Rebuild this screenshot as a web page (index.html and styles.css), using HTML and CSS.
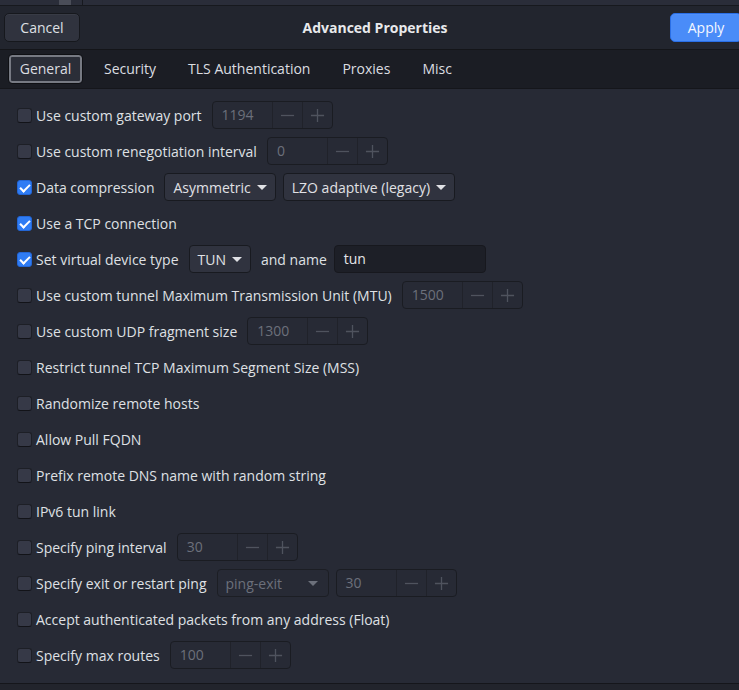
FILE: index.html
```html
<!DOCTYPE html>
<html lang="en">
<head>
    <meta charset="UTF-8">
    <meta name="viewport" content="width=device-width, initial-scale=1.0">
    <title>Advanced Properties</title>
    <link rel="stylesheet" href="styles.css">
</head>
<body>

    <div class="strip">
        <span class="strip-block"></span>
        <span class="strip-line"></span>
    </div>

    <div class="header">
        <button class="btn">Cancel</button>
        <div class="title">Advanced Properties</div>
        <button class="btn apply">Apply</button>
    </div>

    <div class="tabs">
        <span class="tab active">General</span>
        <span class="tab">Security</span>
        <span class="tab">TLS Authentication</span>
        <span class="tab">Proxies</span>
        <span class="tab">Misc</span>
    </div>

    <div class="content">
        <div class="row">
            <span class="check"></span><span class="label">Use custom gateway port</span>
            <div class="spin"><span class="spin-value">1194</span><span class="spin-btn"><svg viewBox="0 0 16 16"><path d="M1 8h14"/></svg></span><span class="spin-btn"><svg viewBox="0 0 16 16"><path d="M1 8h14M8 1v14"/></svg></span></div>
        </div>
        <div class="row">
            <span class="check"></span><span class="label">Use custom renegotiation interval</span>
            <div class="spin"><span class="spin-value">0</span><span class="spin-btn"><svg viewBox="0 0 16 16"><path d="M1 8h14"/></svg></span><span class="spin-btn"><svg viewBox="0 0 16 16"><path d="M1 8h14M8 1v14"/></svg></span></div>
        </div>
        <div class="row">
            <span class="check on"></span><span class="label">Data compression</span>
            <div class="combo">Asymmetric <span class="arrow"></span></div>
            <div class="combo tight">LZO adaptive (legacy) <span class="arrow"></span></div>
        </div>
        <div class="row">
            <span class="check on"></span><span class="label">Use a TCP connection</span>
        </div>
        <div class="row">
            <span class="check on"></span><span class="label">Set virtual device type</span>
            <div class="combo">TUN <span class="arrow"></span></div>
            <span class="text">and name</span>
            <div class="entry">tun</div>
        </div>
        <div class="row">
            <span class="check"></span><span class="label">Use custom tunnel Maximum Transmission Unit (MTU)</span>
            <div class="spin"><span class="spin-value">1500</span><span class="spin-btn"><svg viewBox="0 0 16 16"><path d="M1 8h14"/></svg></span><span class="spin-btn"><svg viewBox="0 0 16 16"><path d="M1 8h14M8 1v14"/></svg></span></div>
        </div>
        <div class="row">
            <span class="check"></span><span class="label">Use custom UDP fragment size</span>
            <div class="spin"><span class="spin-value">1300</span><span class="spin-btn"><svg viewBox="0 0 16 16"><path d="M1 8h14"/></svg></span><span class="spin-btn"><svg viewBox="0 0 16 16"><path d="M1 8h14M8 1v14"/></svg></span></div>
        </div>
        <div class="row">
            <span class="check"></span><span class="label">Restrict tunnel TCP Maximum Segment Size (MSS)</span>
        </div>
        <div class="row">
            <span class="check"></span><span class="label">Randomize remote hosts</span>
        </div>
        <div class="row">
            <span class="check"></span><span class="label">Allow Pull FQDN</span>
        </div>
        <div class="row">
            <span class="check"></span><span class="label">Prefix remote DNS name with random string</span>
        </div>
        <div class="row">
            <span class="check"></span><span class="label">IPv6 tun link</span>
        </div>
        <div class="row">
            <span class="check"></span><span class="label">Specify ping interval</span>
            <div class="spin"><span class="spin-value">30</span><span class="spin-btn"><svg viewBox="0 0 16 16"><path d="M1 8h14"/></svg></span><span class="spin-btn"><svg viewBox="0 0 16 16"><path d="M1 8h14M8 1v14"/></svg></span></div>
        </div>
        <div class="row">
            <span class="check"></span><span class="label">Specify exit or restart ping</span>
            <div class="combo disabled">ping-exit <span class="arrow"></span></div>
            <div class="spin tight"><span class="spin-value">30</span><span class="spin-btn"><svg viewBox="0 0 16 16"><path d="M1 8h14"/></svg></span><span class="spin-btn"><svg viewBox="0 0 16 16"><path d="M1 8h14M8 1v14"/></svg></span></div>
        </div>
        <div class="row">
            <span class="check"></span><span class="label">Accept authenticated packets from any address (Float)</span>
        </div>
        <div class="row">
            <span class="check"></span><span class="label">Specify max routes</span>
            <div class="spin"><span class="spin-value">100</span><span class="spin-btn"><svg viewBox="0 0 16 16"><path d="M1 8h14"/></svg></span><span class="spin-btn"><svg viewBox="0 0 16 16"><path d="M1 8h14M8 1v14"/></svg></span></div>
        </div>
    </div>

    <div class="footer"></div>

</body>
</html>
```

FILE: styles.css
```css
body {
    margin: 0;
    padding: 0;
    font-family: "Open Sans", "Noto Sans", sans-serif;
    font-size: 14px;
    color: #dfe0e4;
    background-color: #22242c;
    height: 690px;
    overflow: hidden;
}

.strip {
    height: 5px;
    background-color: #2a2d39;
    position: relative;
}

.strip-block {
    position: absolute;
    left: 59px;
    top: 0;
    width: 12px;
    height: 5px;
    background-color: #4a4d58;
}

.strip-line {
    position: absolute;
    left: 82px;
    top: 0;
    width: 1px;
    height: 5px;
    background-color: #17191f;
}

.header {
    background-color: #22252e;
    border-top: 1px solid #17191e;
    border-bottom: 1px solid #141519;
    display: flex;
    align-items: center;
    padding: 0 0 0 4px;
    box-sizing: border-box;
    height: 45px;
}

.title {
    flex: 1;
    text-align: center;
    font-weight: bold;
    font-size: 14px;
    color: #e8e9ec;
}

.btn {
    font-family: inherit;
    font-size: 14px;
    color: #dfe0e4;
    background-color: #30333e;
    border: 1px solid #16181d;
    border-radius: 5px;
    height: 29px;
    width: 76px;
    padding: 0;
    box-shadow: inset 0 1px 0 rgba(255, 255, 255, 0.04);
}

.apply {
    width: 72px;
    margin-right: -3px;
    background-color: #4a8cf8;
    border-color: #2a6fe6;
    color: #f4f7ff;
}

.tabs {
    height: 38px;
    background-color: #1b1d24;
    border-bottom: 1px solid #15161b;
    display: flex;
    align-items: center;
    padding-left: 8px;
}

.tab {
    height: 30px;
    line-height: 30px;
    padding: 0 32px 0 0;
    color: #dcdde1;
    font-size: 14px;
}

.tab.active {
    box-sizing: border-box;
    width: 75px;
    text-align: center;
    padding: 0;
    margin-right: 21px;
    background-color: #2b2e38;
    border: 1px solid #0f1014;
    border-radius: 4px;
    box-shadow: inset 0 0 0 2px #777a83;
    line-height: 28px;
}

.content {
    background-color: #272a35;
    padding: 8px 0 10px 17px;
    border-bottom: 1px solid #15161b;
}

.row {
    height: 36px;
    display: flex;
    align-items: center;
}

.check {
    box-sizing: border-box;
    width: 15px;
    height: 15px;
    border-radius: 3px;
    background-color: #363947;
    border: 1px solid #1d1f26;
    border-bottom-color: #121318;
    margin-right: 4px;
    flex-shrink: 0;
    position: relative;
}

.check.on {
    background-color: #2f7cf4;
    border-color: #2366d6;
}

.check.on::after {
    content: "";
    position: absolute;
    left: 4px;
    top: 1px;
    width: 4px;
    height: 8px;
    border: solid #ffffff;
    border-width: 0 2px 2px 0;
    transform: rotate(45deg);
}

.label {
    margin-right: 10px;
    white-space: nowrap;
}

.text {
    margin: 0 7px 0 10px;
}

.spin {
    display: flex;
    height: 28px;
    width: 121px;
    box-sizing: border-box;
    border: 1px solid #1a1c22;
    border-radius: 4px;
    color: #6c707b;
}

.spin.tight {
    margin-left: 7px;
}

.spin-value {
    flex: 1;
    padding-left: 9px;
    line-height: 26px;
}

.spin-btn {
    width: 29px;
    display: flex;
    align-items: center;
    justify-content: center;
    border-left: 1px solid #20222a;
}

.spin-btn svg {
    width: 15px;
    height: 15px;
    fill: none;
    stroke: #4f535e;
    stroke-width: 1.4;
}

.combo {
    height: 28px;
    box-sizing: border-box;
    display: flex;
    align-items: center;
    padding: 0 8px 0 8px;
    background-color: #30333f;
    border: 1px solid #181a20;
    border-radius: 4px;
    color: #e0e1e5;
}

.combo.tight {
    margin-left: 7px;
}

.combo.disabled {
    background-color: transparent;
    border-color: #1c1e24;
    color: #6c707b;
    width: 112px;
    justify-content: space-between;
    padding-right: 10px;
}

.arrow {
    display: inline-block;
    margin-left: 6px;
    width: 0;
    height: 0;
    border-left: 5px solid transparent;
    border-right: 5px solid transparent;
    border-top: 5px solid #e0e1e5;
}

.combo.disabled .arrow {
    border-top-color: #6c707b;
}

.entry {
    width: 152px;
    height: 28px;
    box-sizing: border-box;
    background-color: #1d1f27;
    border: 1px solid #17181e;
    border-radius: 4px;
    padding-left: 9px;
    line-height: 26px;
    color: #e4e5e8;
}

.footer {
    height: 10px;
    background-color: #22242c;
}
```
